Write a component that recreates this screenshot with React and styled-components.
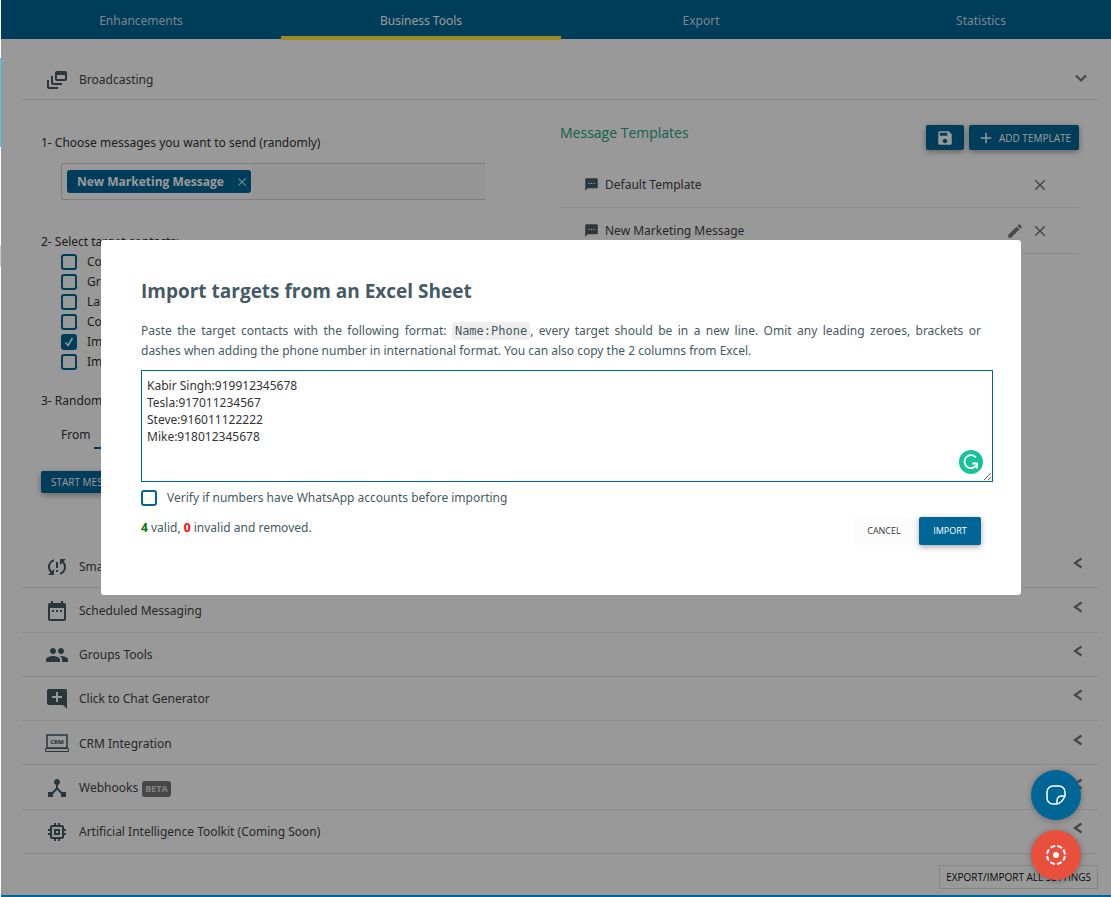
import React, { useEffect, useRef, useState } from "react";
import styled, { createGlobalStyle, css } from "styled-components";
import {
  MdOutlineDynamicFeed, MdSyncProblem, MdDateRange, MdPeople, MdAddComment,
  MdDeviceHub, MdMemory, MdSms, MdSave, MdAdd, MdClose, MdEdit,
} from "react-icons/md";

const GlobalStyle = createGlobalStyle`
  *, *::before, *::after { box-sizing: border-box; }
  body { margin: 0; background: #fff; color: #333; overflow: hidden;
    font: 12px/20px "Noto Sans", "Liberation Sans", sans-serif; }
  button, input, textarea { font: inherit; color: inherit; margin: 0; }
  h1, h2, h3, p, ul { margin: 0; padding: 0; font-weight: 400; font-size: inherit; }
  ul { list-style: none; }
`;

const Page = styled.div`
  display: grid;
  grid-template-columns: 1px 1fr;
  min-height: 100vh;
  overflow: hidden;
`;
const Rail = styled.div`
  padding-top: 58px;
  &::before { content: ""; display: block; height: 89px; background: #4fc3f7; }
  &::after { content: ""; display: block; height: 22px; margin-top: 98px; background: #ccc; }
`;
const Frame = styled.div`
  position: relative;
  margin-right: -10px;
  border-bottom: 2px solid #006696;
`;
const Tabs = styled.nav`
  display: grid;
  grid-template-columns: repeat(4, 1fr);
  height: 39px;
  background: #006696;
`;
const Tab = styled.button`
  height: 40px;
  padding: 6px 0 0;
  border: 0;
  border-bottom: 4px solid ${(p) => (p.$active ? "#ffe93b" : "transparent")};
  background: none;
  color: ${(p) => (p.$active ? "#fff" : "#ccdfe9")};
`;
const Content = styled.main`
  padding: 0 23px 6px 21px;
`;
const SectionHead = styled.div`
  display: grid;
  grid-template-columns: 24px 1fr 24px;
  align-items: center;
  column-gap: 10px;
  padding: ${(p) => (p.$open ? "20px 5px 0 23px" : "0 8px 0 23px")};
  height: ${(p) => (p.$open ? "61px" : "auto")};
  border-bottom: 1px solid #ebebeb;
  color: #444;
  & > svg:first-child { color: #455a64; margin-top: 2px; }
  & > h2 { padding-top: 2px; }
`;
const SectionList = styled.div`
  display: grid;
  grid-auto-rows: 1fr;
  height: 310px;
`;
const Toggle = styled.button`
  display: grid;
  place-items: center;
  padding: 0 0 ${(p) => (p.$open ? "2px" : "6px")};
  border: 0;
  background: none;
  color: #777;
`;
const Beta = styled.span`
  display: inline-block;
  margin-left: 4px;
  padding: 0 3px;
  border-radius: 3px;
  background: #777;
  color: #ddd;
  font: 700 9px/16px "Open Sans", sans-serif;
`;
const Broadcast = styled.div`
  display: grid;
  grid-template-columns: 1fr 519px;
  height: 444px;
  padding: 22px 19px 0 19px;
`;
const Step = styled.p`
  line-height: 20px;
`;
const TagBox = styled.div`
  display: flex;
  width: 424px;
  height: 37px;
  margin: 10px 0 32px 20px;
  padding: 6px 5px;
  border: 1px solid #d2d2d2;
  border-right: 0;
  border-radius: 3px 0 0 3px;
  background: linear-gradient(90deg, transparent 190px, #f8f8f8 190px);
`;
const Tag = styled.span`
  display: flex;
  align-items: center;
  height: 23px;
  padding-left: 10px;
  border-radius: 3px;
  background: #006696;
  color: #fff;
  font-family: "Open Sans", sans-serif;
  font-weight: 700;
`;
const TagClose = styled.button`
  display: grid;
  place-items: center;
  width: 18px;
  height: 14px;
  margin-left: 9px;
  padding: 0;
  border: 0;
  border-left: 1px solid #00837e;
  background: none;
  color: #cfe0ea;
`;
const Left = styled.div`
  padding-top: 11px;
`;
const Options = styled.div`
  display: grid;
  grid-auto-rows: 20px;
  padding-left: 20px;
  margin-bottom: 19px;
`;
const CheckLabel = styled.label`
  display: flex;
  align-items: center;
  gap: 10px;
`;
const Check = styled.input`
  appearance: none;
  flex: none;
  width: 16px;
  height: 16px;
  border: 2px solid #006696;
  border-radius: 3px;
  background: transparent;
  &:checked { background: #006696 url("data:image/svg+xml,%3Csvg xmlns='http://www.w3.org/2000/svg' viewBox='0 0 12 12'%3E%3Cpath d='M2.5 6.5l2.5 3L9.5 2' fill='none' stroke='white' stroke-width='1.5'/%3E%3C/svg%3E") center / 12px no-repeat; }
`;
const Delay = styled.label`
  display: flex;
  gap: 4px;
  align-items: flex-start;
  padding: 14px 0 0 20px;
`;
const DelayInput = styled.input`
  width: 60px;
  height: 24px;
  border: 0;
  border-bottom: 2px solid #006696;
  background: none;
`;
const buttonBase = css`
  border: 0;
  border-radius: 2px;
  background: #006696;
  color: #fff;
  font-family: "Open Sans", sans-serif;
  font-size: 10px;
  font-weight: 500;
  box-shadow: 0 2px 6px rgba(0, 0, 0, 0.35);
`;
const StartButton = styled.button`
  ${buttonBase}
  height: 22px;
  margin-top: 22px;
  padding: 0 10px;
`;
const TemplateHead = styled.div`
  display: flex;
  gap: 5px;
  padding-top: 3px;
  height: 40px;
  align-items: flex-start;
`;
const TemplateTitle = styled.h2`
  flex: 1;
  color: #1fa37f;
  && { font-size: 14px; }
  font-family: "Open Sans", sans-serif;
  line-height: 16px;
`;
const TemplateButton = styled.button`
  ${buttonBase}
  display: flex;
  align-items: center;
  justify-content: center;
  gap: 4px;
  height: 25px;
  width: ${(p) => (p.$wide ? "110px" : "38px")};
  padding: 0;
  white-space: nowrap;
`;
const Template = styled.li`
  display: grid;
  grid-template-columns: 14px 1fr auto auto;
  align-items: center;
  gap: 7px;
  height: 46px;
  padding: 0 30px 0 24px;
  border-bottom: 1px solid #ebebeb;
  color: #444;
  & > svg { color: #455a64; }
`;
const IconButton = styled.button`
  display: grid;
  place-items: center;
  padding: 0;
  border: 0;
  background: none;
  color: #777;
`;
const Footer = styled.footer`
  display: flex;
  justify-content: flex-end;
  padding-top: 11px;
`;
const SettingsButton = styled.button`
  height: 24px;
  padding: 0 6px;
  border: 1px solid #e0e0e0;
  background: none;
  color: #111;
  font-family: "Open Sans", sans-serif;
  font-size: 10px;
  white-space: nowrap;
`;
const Overlay = styled.div`
  position: absolute;
  inset: 0;
  z-index: 1;
  padding: 240px 100px 0;
  background: rgba(0, 0, 0, 0.4);
`;
const Dialog = styled.section`
  padding: 38px 40px 50px;
  border-radius: 3px;
  background: #fff;
  color: #455a64;
`;
const DialogTitle = styled.h1`
  && { font-size: 19px; font-weight: 700; }
  font-family: "Open Sans", sans-serif;
  line-height: 26px;
`;
const Intro = styled.p`
  margin-top: 17px;
  text-align: justify;
`;
const Code = styled.code`
  padding: 2px 3px;
  border-radius: 3px;
  background: #eee;
  font: 12px "DejaVu Sans Mono", monospace;
`;
const Editor = styled.div`
  position: relative;
  margin: 9px -12px 6px 0;
`;
const Targets = styled.textarea`
  display: block;
  width: 100%;
  height: 112px;
  padding: 6px 5px;
  border: 1px solid #006696;
  border-radius: 0;
  outline: 0;
  color: #333;
  line-height: 17px;
`;
const Grammar = styled.svg`
  position: absolute;
  right: 10px;
  bottom: 8px;
`;
const DialogFoot = styled.div`
  display: flex;
  justify-content: space-between;
  align-items: flex-start;
  margin-top: 9px;
  & > p { padding-top: 1px; }
`;
const Count = styled.b`
  color: ${(p) => p.$color};
`;
const Actions = styled.div`
  display: flex;
  gap: 4px;
`;
const DialogButton = styled.button`
  ${buttonBase}
  width: 62px;
  height: 28px;
  padding: 0;
  font-size: 9px;
  ${(p) => p.$plain && css`
    background: #fcfcfc;
    color: #333;
    box-shadow: none;
    font-weight: 400;
  `}
`;
const Floating = styled.div`
  position: absolute;
  z-index: 2;
  right: 40px;
  bottom: 15px;
  display: grid;
  gap: 10px;
`;
const Fab = styled.button`
  display: grid;
  place-items: center;
  width: 50px;
  height: 50px;
  padding: 0;
  border: 0;
  border-radius: 50%;
  background: ${(p) => p.$color};
  color: #fff;
  box-shadow: 0 1px 6px rgba(0, 0, 0, 0.3);
`;

const Chevron = ({ down }) => (
  <svg width="12" height="12" viewBox="0 0 12 12" fill="none" stroke="currentColor" strokeWidth="2.2">
    <path d={down ? "M1 3.5L6 8.5L11 3.5" : "M9.5 1.5L3 6L9.5 10.5"} />
  </svg>
);

const CrmIcon = () => (
  <svg width="24" height="24" viewBox="0 0 24 24" fill="none" stroke="currentColor">
    <rect x="2" y="3" width="20" height="13" strokeWidth="1.5" />
    <path d="M.5 16.5H23.5V19.5H.5Z" />
    <text x="12" y="12" textAnchor="middle" fontSize="6" fontWeight="800" fill="currentColor" stroke="none">CRM</text>
  </svg>
);

const SECTIONS = [
  ["Smart Auto Reply", <MdSyncProblem size={24} />],
  ["Scheduled Messaging", <MdDateRange size={24} />],
  ["Groups Tools", <MdPeople size={24} />],
  ["Click to Chat Generator", <MdAddComment size={24} />],
  ["CRM Integration", <CrmIcon />],
  ["Webhooks", <MdDeviceHub size={24} />, true],
  ["Artificial Intelligence Toolkit (Coming Soon)", <MdMemory size={24} />],
];
const TARGETS = ["Contacts", "Groups", "Labels", "Countries", "Import from Excel", "Import from CSV"];

export default function App() {
  const [tab, setTab] = useState("Business Tools");
  const editor = useRef(null);
  useEffect(() => {
    const end = editor.current.value.length;
    editor.current.focus();
    editor.current.setSelectionRange(end, end);
  }, []);
  return (
    <>
      <GlobalStyle />
      <Page>
        <Rail />
        <Frame>
          <Tabs>
            {["Enhancements", "Business Tools", "Export", "Statistics"].map((t) => (
              <Tab key={t} $active={t === tab} onClick={() => setTab(t)}>{t}</Tab>
            ))}
          </Tabs>
          <Content>
            <SectionHead $open>
              <MdOutlineDynamicFeed size={24} />
              <h2>Broadcasting</h2>
              <Toggle $open aria-label="Collapse Broadcasting"><Chevron down /></Toggle>
            </SectionHead>
            <Broadcast>
              <Left>
                <Step>1- Choose messages you want to send (randomly)</Step>
                <TagBox>
                  <Tag>New Marketing Message<TagClose aria-label="Remove"><MdClose size={14} /></TagClose></Tag>
                </TagBox>
                <Step>2- Select target contacts:</Step>
                <Options>
                  {TARGETS.map((t, i) => (
                    <CheckLabel key={t}><Check type="checkbox" defaultChecked={i === 4} />{t}</CheckLabel>
                  ))}
                </Options>
                <Step>3- Random delay</Step>
                <Delay>From <DelayInput /></Delay>
                <StartButton>START MESSAGING</StartButton>
              </Left>
              <div>
                <TemplateHead>
                  <TemplateTitle>Message Templates</TemplateTitle>
                  <TemplateButton aria-label="Save"><MdSave size={18} /></TemplateButton>
                  <TemplateButton $wide><MdAdd size={18} />ADD TEMPLATE</TemplateButton>
                </TemplateHead>
                <ul>
                  <Template>
                    <MdSms size={15} />Default Template<span />
                    <IconButton aria-label="Delete"><MdClose size={18} /></IconButton>
                  </Template>
                  <Template>
                    <MdSms size={15} />New Marketing Message
                    <IconButton aria-label="Edit"><MdEdit size={18} /></IconButton>
                    <IconButton aria-label="Delete"><MdClose size={18} /></IconButton>
                  </Template>
                </ul>
              </div>
            </Broadcast>
            <SectionList>
              {SECTIONS.map(([name, icon, beta]) => (
                <SectionHead key={name}>
                  {icon}
                  <h2>{name}{beta && <Beta>BETA</Beta>}</h2>
                  <Toggle aria-label={`Expand ${name}`}><Chevron /></Toggle>
                </SectionHead>
              ))}
            </SectionList>
            <Footer><SettingsButton>EXPORT/IMPORT ALL SETTINGS</SettingsButton></Footer>
          </Content>
          <Overlay>
            <Dialog role="dialog" aria-labelledby="import-title">
              <DialogTitle id="import-title">Import targets from an Excel Sheet</DialogTitle>
              <Intro>
                Paste the target contacts with the following format: <Code>Name:Phone</Code>, every target should be in a new line. Omit any leading zeroes, brackets or dashes&nbsp;when adding the phone number in international format. You can also copy the 2 columns from Excel.
              </Intro>
              <Editor>
                <Targets ref={editor} aria-label="Targets" spellCheck={false}
                  defaultValue={"Kabir Singh:919912345678\nTesla:917011234567\nSteve:916011122222\nMike:918012345678"} />
                <Grammar width="24" height="24" viewBox="0 0 24 24" fill="none" stroke="#fff" strokeWidth="1.8">
                  <circle cx="12" cy="12" r="12" fill="#15c39a" stroke="none" />
                  <path d="M17 7.5A6.5 6.5 0 1 0 17.5 15" />
                  <path d="M13 13.5H18V18.5" />
                </Grammar>
              </Editor>
              <CheckLabel><Check type="checkbox" />Verify if numbers have WhatsApp accounts before importing</CheckLabel>
              <DialogFoot>
                <p><Count $color="green">4</Count> valid, <Count $color="red">0</Count> invalid and removed.</p>
                <Actions>
                  <DialogButton $plain>CANCEL</DialogButton>
                  <DialogButton>IMPORT</DialogButton>
                </Actions>
              </DialogFoot>
            </Dialog>
          </Overlay>
          <Floating>
            <Fab $color="#006696" aria-label="Stickers">
              <svg width="22" height="22" viewBox="0 0 22 22" fill="none" stroke="currentColor" strokeWidth="1.5">
                <path d="M12 20H8A6 6 0 0 1 2 14V8A6 6 0 0 1 8 2H14A6 6 0 0 1 20 8V12Q17 19 12 20Z" />
                <path d="M12 20V17Q12 12 17 12H20" />
              </svg>
            </Fab>
            <Fab $color="#e94f3d" aria-label="Record status">
              <svg width="22" height="22" viewBox="0 0 22 22">
                <circle cx="11" cy="11" r="3" fill="currentColor" />
                <circle cx="11" cy="11" r="9" fill="none" stroke="currentColor" strokeWidth="2" strokeDasharray="5 2.07" strokeDashoffset="-1" />
              </svg>
            </Fab>
          </Floating>
        </Frame>
      </Page>
    </>
  );
}
